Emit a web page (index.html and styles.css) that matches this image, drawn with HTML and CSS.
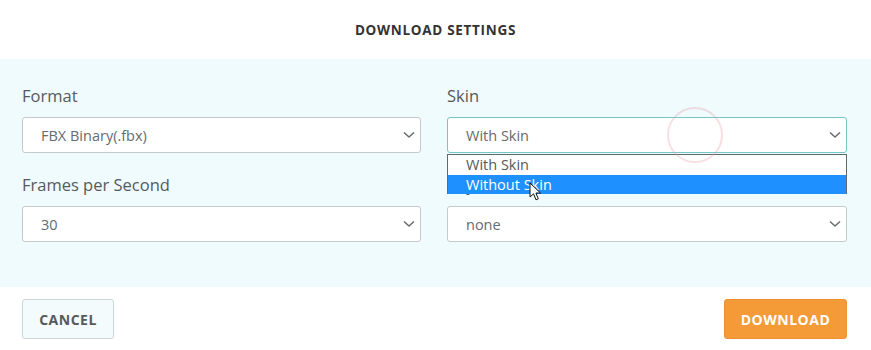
FILE: index.html
```html
<!DOCTYPE html>
<html>
<head>
<meta charset="utf-8">
<link rel="stylesheet" href="styles.css">
</head>
<body>
<div class="dialog">
  <header class="title">DOWNLOAD SETTINGS</header>
  <section class="panel">
    <div class="grid">
      <div class="field">
        <label class="label">Format</label>
        <div class="select">
          <span>FBX Binary(.fbx)</span>
          <svg class="chev" width="12" height="8" viewBox="0 0 12 8"><path d="M1 1.5 L6 6 L11 1.5" fill="none" stroke="#6a6f72" stroke-width="1.6"/></svg>
        </div>
      </div>
      <div class="field skin">
        <label class="label">Skin</label>
        <div class="select focused">
          <span>With Skin</span>
          <svg class="chev" width="12" height="8" viewBox="0 0 12 8"><path d="M1 1.5 L6 6 L11 1.5" fill="none" stroke="#6a6f72" stroke-width="1.6"/></svg>
        </div>
        <ul class="options">
          <li class="opt">With Skin</li>
          <li class="opt active">Without Skin</li>
        </ul>
        <svg class="spinner" width="60" height="60" viewBox="0 0 60 60"><circle cx="30" cy="30" r="27" fill="none" stroke="rgba(235,140,150,0.28)" stroke-width="2"/></svg>
        <svg class="cursor" width="14" height="20" viewBox="0 0 14 20"><path d="M1 1 L1 15 L4.5 11.8 L7 17.8 L9.3 16.8 L6.9 11 L11.5 11 Z" fill="#fff" stroke="#111" stroke-width="1" stroke-linejoin="round"/></svg>
      </div>
      <div class="field">
        <label class="label">Frames per Second</label>
        <div class="select">
          <span>30</span>
          <svg class="chev" width="12" height="8" viewBox="0 0 12 8"><path d="M1 1.5 L6 6 L11 1.5" fill="none" stroke="#6a6f72" stroke-width="1.6"/></svg>
        </div>
      </div>
      <div class="field">
        <label class="label">Keyframe Reduction</label>
        <div class="select">
          <span>none</span>
          <svg class="chev" width="12" height="8" viewBox="0 0 12 8"><path d="M1 1.5 L6 6 L11 1.5" fill="none" stroke="#6a6f72" stroke-width="1.6"/></svg>
        </div>
      </div>
    </div>
  </section>
  <footer class="footer">
    <button class="btn cancel">CANCEL</button>
    <button class="btn download">DOWNLOAD</button>
  </footer>
</div>
</body>
</html>
```
FILE: styles.css
```css
* { box-sizing: border-box; }
html, body { margin: 0; padding: 0; background: #fff; }
body { font-family: "Open Sans", "Noto Sans", sans-serif; width: 871px; height: 350px; overflow: hidden; }

.dialog { width: 871px; }

.title {
  height: 59px;
  display: flex;
  align-items: center;
  justify-content: center;
  font-size: 13.5px;
  font-weight: 700;
  letter-spacing: 0.7px;
  color: #333;
  padding-top: 1px;
}

.panel {
  background: #effbfc;
  padding: 27px 24px 45px 22px;
}

.grid {
  display: grid;
  grid-template-columns: 399px 400px;
  column-gap: 26px;
  row-gap: 22px;
}

.field { position: relative; }

.label {
  display: block;
  font-size: 16.5px;
  line-height: 20px;
  color: #555a5c;
  margin-bottom: 11px;
}

.select {
  height: 36px;
  background: #fff;
  border: 1px solid #c4c9cb;
  border-radius: 3px;
  display: flex;
  align-items: center;
  justify-content: space-between;
  padding: 0 5px 0 18px;
  font-size: 14.5px;
  color: #666b6e;
}
.select.focused { border-color: #74c6c8; }

.options {
  position: absolute;
  left: 0;
  top: 68px;
  width: 400px;
  margin: 0;
  padding: 0;
  list-style: none;
  background: #fff;
  border: 1px solid #5f6b6b;
  border-bottom: none;
  z-index: 2;
}
.opt {
  height: 19px;
  line-height: 19px;
  padding-left: 18px;
  font-size: 14.5px;
  color: #555a5c;
}
.opt:first-child { height: 20px; line-height: 19px; }
.opt.active { background: #1e90ff; color: #fff; }

.spinner { position: absolute; left: 218px; top: 19px; z-index: 3; }
.cursor { position: absolute; left: 82px; top: 96px; z-index: 4; }

.footer {
  display: flex;
  justify-content: space-between;
  padding: 12px 24px 0 22px;
}

.btn {
  height: 40px;
  border-radius: 3px;
  font-family: "Open Sans", "Noto Sans", sans-serif;
  font-size: 14px;
  font-weight: 700;
  letter-spacing: 0.5px;
  cursor: pointer;
}
.cancel {
  width: 92px;
  background: #f3fbfc;
  border: 1px solid #cdd6d8;
  color: #555a5c;
}
.download {
  width: 123px;
  background: #f49a36;
  border: 1px solid #f09030;
  color: #fff;
}
```
